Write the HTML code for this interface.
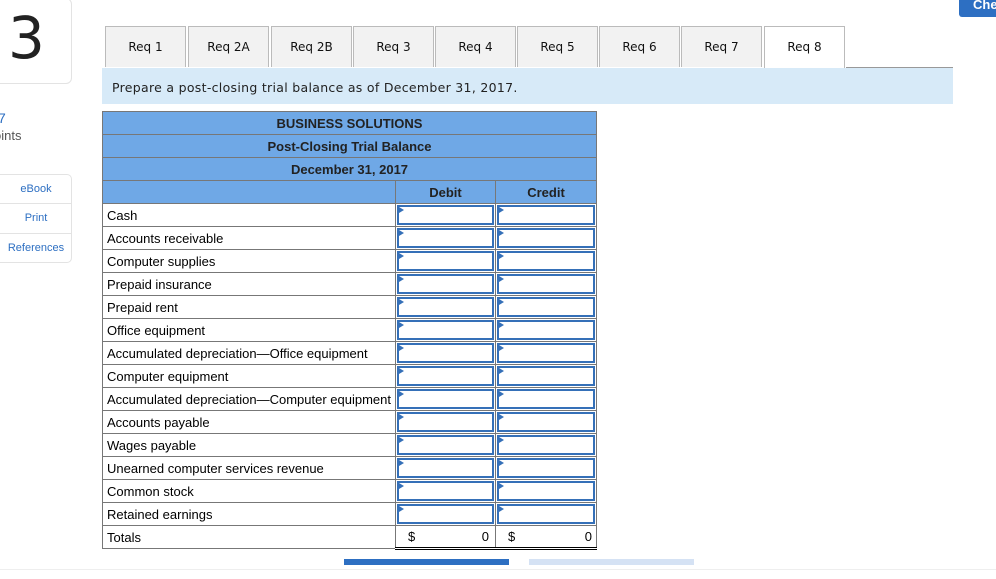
<!DOCTYPE html>
<html><head><style>
body{margin:0;width:996px;height:579px;background:#fff;font-family:"Liberation Sans",sans-serif;position:relative;overflow:hidden}
.a{position:absolute}
.tab{position:absolute;top:26px;height:41px;width:81px;background:#f2f2f2;border:1px solid #bbb;border-bottom:none;box-sizing:border-box;font-family:"DejaVu Sans",sans-serif;font-size:12px;text-align:center;line-height:40px;color:#111}
table{position:absolute;left:102px;top:111px;border-collapse:collapse;font-size:13px}
td{border:1px solid #777;height:23px;padding:0;box-sizing:border-box}
.h td{background:#6fa8e6;text-align:center;font-weight:bold;color:#222}
.l{padding-left:4px;width:293px}
.in{width:100px;background:#fff;position:relative}
.in div{position:absolute;left:1px;top:1px;right:1px;bottom:1px;border:2px solid #3570b8}
.in div:before{content:"";position:absolute;left:0;top:0;border-left:5px solid #3570b8;border-top:3px solid transparent;border-bottom:3px solid transparent}
</style></head><body>
<div class="a" style="left:-10px;top:-2px;width:80px;height:84px;border:1px solid #e3e3e3;border-radius:6px"></div>
<div class="a" style="left:8px;top:4px;font-size:58px;color:#222;font-family:'DejaVu Sans',sans-serif">3</div>
<div class="a" style="left:-2px;top:110px;font-size:14px;color:#2d6fc2">7</div>
<div class="a" style="left:-6px;top:128px;font-size:13px;color:#555">oints</div>
<div class="a" style="left:-10px;top:174px;width:80px;height:87px;border:1px solid #e3e3e3;border-radius:5px;font-size:11px;color:#2d6fc2;text-align:center">
<div style="height:28px;line-height:28px;border-bottom:1px solid #e3e3e3;padding-left:10px">eBook</div>
<div style="height:29px;line-height:29px;border-bottom:1px solid #e3e3e3;padding-left:10px">Print</div>
<div style="height:28px;line-height:28px;padding-left:10px">References</div></div>
<div class="a" style="left:959px;top:-6px;width:50px;height:23px;background:#2d6fc2;border-radius:3px;color:#fff;font-weight:bold;font-size:13px;padding-left:14px;line-height:22px">Che</div>
<div class="tab" style="left:105px">Req 1</div>
<div class="tab" style="left:188px">Req 2A</div>
<div class="tab" style="left:271px">Req 2B</div>
<div class="tab" style="left:353px">Req 3</div>
<div class="tab" style="left:435px">Req 4</div>
<div class="tab" style="left:517px">Req 5</div>
<div class="tab" style="left:599px">Req 6</div>
<div class="tab" style="left:681px">Req 7</div>
<div class="tab" style="left:764px;background:#fff;height:43px">Req 8</div>
<div class="a" style="left:102px;top:68px;width:851px;height:36px;background:#d7eaf8;font-family:'DejaVu Sans',sans-serif;font-size:12.5px;line-height:40px;padding-left:10px;box-sizing:border-box;letter-spacing:.3px;color:#222">Prepare a post-closing trial balance as of December 31, 2017.</div>
<div class="a" style="left:846px;top:67px;width:107px;border-top:1px solid #999"></div>
<table>
<tr class="h"><td colspan="3">BUSINESS SOLUTIONS</td></tr>
<tr class="h"><td colspan="3">Post-Closing Trial Balance</td></tr>
<tr class="h"><td colspan="3">December 31, 2017</td></tr>
<tr class="h"><td style="width:293px"></td><td style="width:100px">Debit</td><td style="width:101px">Credit</td></tr>
<tr><td class="l">Cash</td><td class="in"><div></div></td><td class="in"><div></div></td></tr>
<tr><td class="l">Accounts receivable</td><td class="in"><div></div></td><td class="in"><div></div></td></tr>
<tr><td class="l">Computer supplies</td><td class="in"><div></div></td><td class="in"><div></div></td></tr>
<tr><td class="l">Prepaid insurance</td><td class="in"><div></div></td><td class="in"><div></div></td></tr>
<tr><td class="l">Prepaid rent</td><td class="in"><div></div></td><td class="in"><div></div></td></tr>
<tr><td class="l">Office equipment</td><td class="in"><div></div></td><td class="in"><div></div></td></tr>
<tr><td class="l">Accumulated depreciation—Office equipment</td><td class="in"><div></div></td><td class="in"><div></div></td></tr>
<tr><td class="l">Computer equipment</td><td class="in"><div></div></td><td class="in"><div></div></td></tr>
<tr><td class="l">Accumulated depreciation—Computer equipment</td><td class="in"><div></div></td><td class="in"><div></div></td></tr>
<tr><td class="l">Accounts payable</td><td class="in"><div></div></td><td class="in"><div></div></td></tr>
<tr><td class="l">Wages payable</td><td class="in"><div></div></td><td class="in"><div></div></td></tr>
<tr><td class="l">Unearned computer services revenue</td><td class="in"><div></div></td><td class="in"><div></div></td></tr>
<tr><td class="l">Common stock</td><td class="in"><div></div></td><td class="in"><div></div></td></tr>
<tr><td class="l">Retained earnings</td><td class="in"><div></div></td><td class="in"><div></div></td></tr>
<tr><td class="l">Totals</td><td style="border-bottom:3px double #000;padding:0 6px 0 12px"><span>$</span><span style="float:right">0</span></td><td style="border-bottom:3px double #000;padding:0 4px 0 12px"><span>$</span><span style="float:right">0</span></td></tr>
</table>
<div class="a" style="left:344px;top:559px;width:165px;height:6px;background:#2d6fc2"></div>
<div class="a" style="left:529px;top:559px;width:165px;height:6px;background:#d5e2f4"></div>
<div class="a" style="left:0;top:569px;width:996px;border-top:1px solid #eee"></div>
</body></html>
